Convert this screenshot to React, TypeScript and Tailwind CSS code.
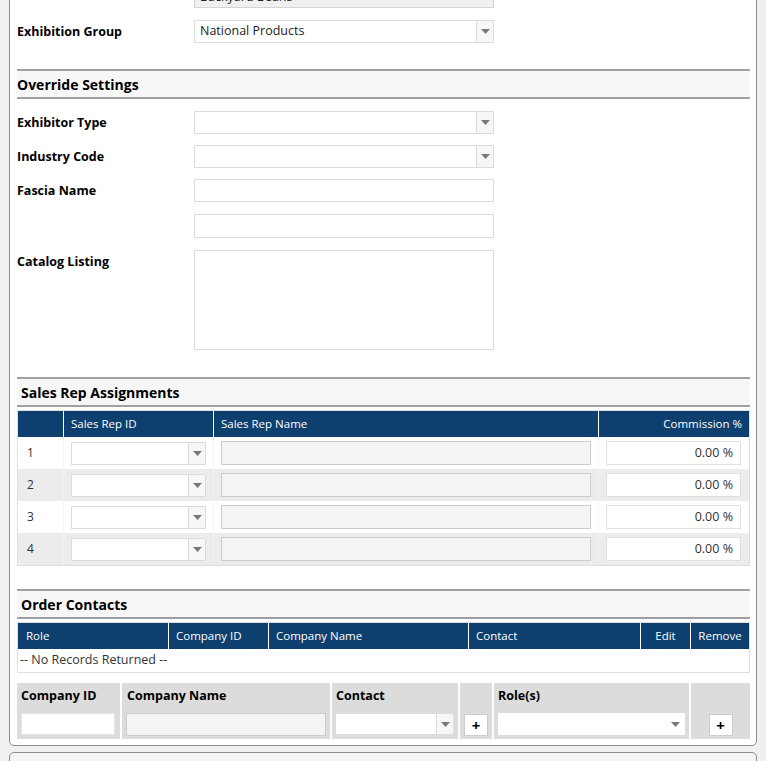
import React from "react";

const font = { fontFamily: '"Open Sans", "Noto Sans", Arial, sans-serif' };

function Arrow() {
  return (
    <svg width="9" height="5" viewBox="0 0 9 5">
      <path d="M0 0 L9 0 L4.5 5 Z" fill="#7a7a7a" />
    </svg>
  );
}

function Select({ value, cls, arrowBg = true }: { value?: string; cls: string; arrowBg?: boolean }) {
  return (
    <div className={`flex border border-[#dcdcdc] bg-white ${cls}`}>
      <div className="flex-1 flex items-center pl-[5px] text-[12.5px] text-[#222] truncate">{value}</div>
      <div
        className={`w-[17px] flex items-center justify-center ${
          arrowBg ? "bg-[#f7f7f7] border-l border-[#dcdcdc]" : ""
        }`}
      >
        <Arrow />
      </div>
    </div>
  );
}

function SectionHeader({ title, pl }: { title: string; pl: string }) {
  return (
    <div
      className={`h-[30px] border-y-2 border-[#a0a0a0] bg-[#f7f7f7] flex items-center ${pl} text-[14px] font-bold text-black`}
    >
      {title}
    </div>
  );
}

function FormRow({
  label,
  children,
  mb,
}: {
  label?: string;
  children: React.ReactNode;
  mb: string;
}) {
  return (
    <div className={`flex ${mb}`}>
      <div className="w-[177px] shrink-0 text-[12.5px] font-bold text-black leading-[23px]">{label}</div>
      {children}
    </div>
  );
}

export default function App() {
  const reps = [1, 2, 3, 4];
  return (
    <div className="w-[766px] h-[761px] overflow-hidden bg-[#f0f0f0] px-[9px]" style={font}>
      <div className="mt-[-40px] bg-white border border-[#8c8c8c] rounded-[5px] pl-[7px] pr-[6px] pb-[6px]">
        <div className="pt-[23px]">
          <FormRow label="Division Name" mb="mb-[12px]">
            <div className="w-[300px] h-[24px] border border-[#d4d4d4] bg-[#f0f0f0] pl-[5px] text-[12.5px] leading-[24px] text-[#222]">
              Backyard Beans
            </div>
          </FormRow>
          <FormRow label="Exhibition Group" mb="mb-[26px]">
            <Select value="National Products" cls="w-[300px] h-[23px]" />
          </FormRow>
        </div>

        <SectionHeader title="Override Settings" pl="pl-0" />

        <div className="pt-[12px]">
          <FormRow label="Exhibitor Type" mb="mb-[11px]">
            <Select cls="w-[300px] h-[23px]" />
          </FormRow>
          <FormRow label="Industry Code" mb="mb-[11px]">
            <Select cls="w-[300px] h-[23px]" />
          </FormRow>
          <FormRow label="Fascia Name" mb="mb-[12px]">
            <div className="w-[300px] h-[23px] border border-[#dcdcdc] bg-white" />
          </FormRow>
          <FormRow mb="mb-[12px]">
            <div className="w-[300px] h-[24px] border border-[#dcdcdc] bg-white" />
          </FormRow>
          <FormRow label="Catalog Listing" mb="mb-[27px]">
            <div className="w-[300px] h-[100px] border border-[#dcdcdc] bg-white" />
          </FormRow>
        </div>

        <SectionHeader title="Sales Rep Assignments" pl="pl-[4px]" />

        <div className="mt-[3px] border border-[#dedede]">
          <div className="flex h-[26px] bg-[#0e406f] text-white text-[11.5px]">
            <div className="w-[46px] border-r border-white" />
            <div className="w-[150px] border-r border-white flex items-center pl-[7px]">Sales Rep ID</div>
            <div className="w-[385px] border-r border-white flex items-center pl-[7px]">Sales Rep Name</div>
            <div className="flex-1 flex items-center justify-end pr-[7px]">Commission %</div>
          </div>
          {reps.map((n, i) => (
            <div key={n} className={`flex h-[32px] ${i % 2 === 1 ? "bg-[#ececec]" : "bg-white"}`}>
              <div className="w-[46px] border-r border-[#f4f4f4] flex items-center pl-[9px] text-[12px] text-[#333]">
                {n}
              </div>
              <div className="w-[150px] border-r border-[#f4f4f4] flex items-center pl-[7px]">
                <Select cls="w-[135px] h-[23px]" />
              </div>
              <div className="w-[385px] border-r border-[#f4f4f4] flex items-center pl-[7px]">
                <div className="w-[370px] h-[24px] border border-[#cccccc] bg-[#f3f4f5]" />
              </div>
              <div className="flex-1 flex items-center pl-[7px]">
                <div className="w-[135px] h-[24px] border border-[#e0e0e0] bg-white flex items-center justify-end pr-[7px] text-[12.5px] text-[#333]">
                  0.00 %
                </div>
              </div>
            </div>
          ))}
        </div>

        <div className="mt-[23px]">
          <SectionHeader title="Order Contacts" pl="pl-[4px]" />
        </div>

        <div className="mt-[3px] border border-[#dedede]">
          <div className="flex h-[26px] bg-[#0e406f] text-white text-[11.5px]">
            <div className="w-[151px] border-r border-white flex items-center pl-[8px]">Role</div>
            <div className="w-[100px] border-r border-white flex items-center pl-[7px]">Company ID</div>
            <div className="w-[200px] border-r border-white flex items-center pl-[7px]">Company Name</div>
            <div className="w-[172px] border-r border-white flex items-center pl-[7px]">Contact</div>
            <div className="w-[50px] border-r border-white flex items-center justify-center">Edit</div>
            <div className="flex-1 flex items-center justify-center">Remove</div>
          </div>
          <div className="h-[23px] flex items-center pl-[2px] text-[12.5px] text-[#333] bg-white">
            -- No Records Returned --
          </div>
        </div>

        <div className="mt-[10px] flex gap-[2px] h-[56px] text-[12.5px] font-bold text-black">
          <div className="w-[103px] bg-[#dcdcdc] pl-[4px] pt-[2px]">
            <div className="leading-[22px]">Company ID</div>
            <div className="mt-[6px] w-[94px] h-[22px] bg-white border border-[#e4e4e4]" />
          </div>
          <div className="w-[208px] bg-[#dcdcdc] pl-[4px] pt-[2px]">
            <div className="leading-[22px] pl-[1px]">Company Name</div>
            <div className="mt-[6px] w-[200px] h-[23px] bg-[#f3f4f5] border border-[#cccccc]" />
          </div>
          <div className="w-[126px] bg-[#dcdcdc] pl-[3px] pt-[2px]">
            <div className="leading-[22px] pl-[1px]">Contact</div>
            <div className="mt-[6px]">
              <Select cls="w-[119px] h-[22px]" />
            </div>
          </div>
          <div className="w-[32px] bg-[#dcdcdc] flex justify-center pt-[31px]">
            <div className="w-[24px] h-[22px] bg-white border border-[#cccccc] flex items-center justify-center text-[15px] font-bold leading-none">
              +
            </div>
          </div>
          <div className="w-[195px] bg-[#dcdcdc] pl-[4px] pt-[2px]">
            <div className="leading-[22px]">Role(s)</div>
            <div className="mt-[6px]">
              <Select cls="w-[187px] h-[22px] border-white" arrowBg={false} />
            </div>
          </div>
          <div className="flex-1 bg-[#dcdcdc] flex justify-center pt-[31px]">
            <div className="w-[24px] h-[22px] bg-white border border-[#cccccc] flex items-center justify-center text-[15px] font-bold leading-none">
              +
            </div>
          </div>
        </div>
      </div>

      <div className="mt-[6px] h-[40px] bg-[#f4f4f4] border border-[#8c8c8c] rounded-[5px]" />
    </div>
  );
}
